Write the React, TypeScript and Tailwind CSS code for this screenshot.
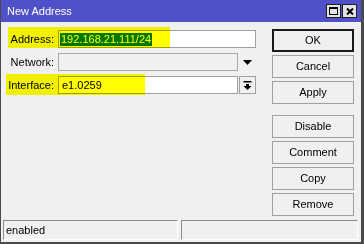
const buttons = ['Cancel', 'Apply'];
const buttons2 = ['Disable', 'Comment', 'Copy', 'Remove'];

function WinButton({ label, primary }: { label: string; primary?: boolean }) {
  return (
    <div
      className={`h-[23px] w-[82px] flex items-center justify-center text-[11px] text-black bg-[#f0f0f0] ${
        primary ? 'border-2 border-[#1a1a1a]' : 'border border-[#a0a0a0]'
      }`}
    >
      {label}
    </div>
  );
}

export default function App() {
  return (
    <div className="relative w-[364px] h-[244px] bg-[#f0f0f0] flex flex-col border-l border-r-[3px] border-b-[2px] border-[#4a4a4a] font-['Liberation_Sans',Arial,sans-serif] overflow-hidden">
      {/* Title bar */}
      <div className="h-[22px] bg-[#5050c8] flex items-center justify-between pl-[6px] pr-[4px]">
        <span className="text-white text-[11px] leading-none">New Address</span>
        <div className="flex gap-[1px]">
          <div className="w-[15px] h-[14px] bg-[#e4e4e4] border border-[#202020] flex items-center justify-center">
            <svg width="9" height="8" viewBox="0 0 9 8">
              <rect x="0.5" y="0.5" width="8" height="7" fill="none" stroke="#000" />
              <rect x="0" y="0" width="9" height="2" fill="#000" />
            </svg>
          </div>
          <div className="w-[15px] h-[14px] bg-[#e4e4e4] border border-[#202020] flex items-center justify-center">
            <svg width="8" height="7" viewBox="0 0 8 7">
              <path d="M1 0.5 L7 6.5 M7 0.5 L1 6.5" stroke="#000" strokeWidth="2" />
            </svg>
          </div>
        </div>
      </div>

      {/* Body */}
      <div className="flex flex-1">
        {/* Form */}
        <div className="flex flex-col gap-[5px] pt-[8px] w-[255px]">
          <div className="flex items-center h-[18px]">
            <span className="w-[53px] text-right text-[11px] text-black">Address:</span>
            <div className="ml-[4px] w-[198px] h-[18px] bg-white border border-[#a0a0a0] flex items-center pl-[1px]">
              <span className="bg-[#0078d7] text-white text-[11px] leading-[13px] px-[1px]">192.168.21.111/24</span>
            </div>
          </div>
          <div className="flex items-center h-[18px]">
            <span className="w-[53px] text-right text-[11px] text-black">Network:</span>
            <div className="ml-[4px] w-[180px] h-[18px] bg-[#f0f0f0] border border-[#a8a8a8]" />
            <div className="w-[18px] flex items-center justify-center">
              <svg width="9" height="5" viewBox="0 0 9 5">
                <path d="M0 0 H9 L4.5 5 Z" fill="#000" />
              </svg>
            </div>
          </div>
          <div className="flex items-center h-[18px]">
            <span className="w-[53px] text-right text-[11px] text-black">Interface:</span>
            <div className="ml-[4px] w-[180px] h-[18px] bg-white border border-[#a0a0a0] flex items-center pl-[3px] text-[11px] text-black">
              e1.0259
            </div>
            <div className="ml-[1px] w-[17px] h-[18px] bg-[#f0f0f0] border border-[#a0a0a0] flex items-center justify-center">
              <svg width="9" height="9" viewBox="0 0 9 9">
                <rect x="0.5" y="0" width="8" height="1.5" fill="#000" />
                <path d="M3 3 H6 V5 H8.5 L4.5 9 L0.5 5 H3 Z" fill="#000" />
              </svg>
            </div>
          </div>
        </div>

        {/* Buttons */}
        <div className="ml-[16px] pt-[7px] flex flex-col gap-[3px]">
          <WinButton label="OK" primary />
          {buttons.map((b) => (
            <WinButton key={b} label={b} />
          ))}
          <div className="h-[5px]" />
          {buttons2.map((b) => (
            <WinButton key={b} label={b} />
          ))}
        </div>
      </div>

      {/* Status bar */}
      <div className="flex gap-[3px] pl-[2px] pr-[3px] pb-[2px]">
        <div className="w-[175px] h-[20px] border-t border-l border-[#8c8c8c] border-r border-b border-r-white border-b-white flex items-center pl-[2px] text-[11px] text-black">
          enabled
        </div>
        <div className="flex-1 h-[20px] border-t border-l border-[#8c8c8c] border-r border-b border-r-white border-b-white" />
      </div>

      {/* Highlighter marks */}
      <div className="absolute left-[7px] top-[27px] w-[162px] h-[21px] bg-[#ffff00] mix-blend-multiply" />
      <div className="absolute left-[5px] top-[74px] w-[139px] h-[21px] bg-[#ffff00] mix-blend-multiply" />
    </div>
  );
}
